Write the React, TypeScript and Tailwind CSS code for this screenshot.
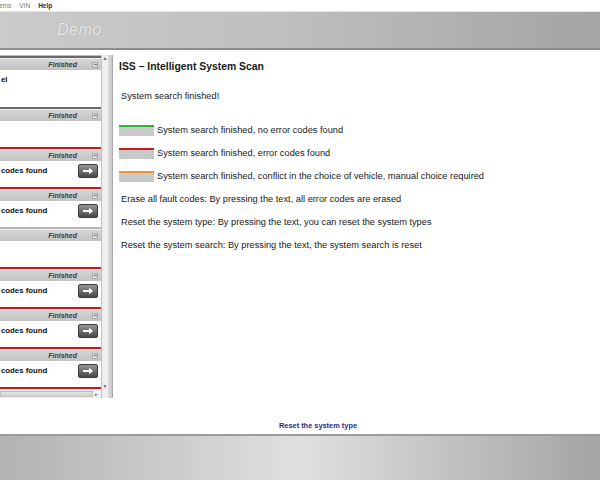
import React from "react";

type Entry = { status: "ok" | "error" | "none"; text?: string; arrow?: boolean; tall?: boolean; last?: boolean };

const entries: Entry[] = [
  { status: "none", text: "el", tall: true },
  { status: "none" },
  { status: "error", text: "codes found", arrow: true },
  { status: "error", text: "codes found", arrow: true },
  { status: "ok" },
  { status: "error", text: "codes found", arrow: true },
  { status: "error", text: "codes found", arrow: true },
  { status: "error", text: "codes found", arrow: true },
  { status: "error", last: true },
];

function ArrowButton() {
  return (
    <div className="w-[20px] h-[14px] rounded-[2px] bg-linear-to-b from-[#959595] to-[#4a4a4a] border border-[#3a3a3a] flex items-center justify-center">
      <svg width="12" height="8" viewBox="0 0 12 8">
        <path d="M1 3h6V0.8L11 4 7 7.2V5H1z" fill="#fff" />
      </svg>
    </div>
  );
}

function EntryRow({ e }: { e: Entry }) {
  const top = e.status === "error" ? "bg-[#c8161c]" : e.status === "ok" ? "bg-[#b8b8b8]" : "bg-[#6a6a6a]";
  if (e.last) return <div className={`h-[2px] ${top}`} />;
  return (
    <div>
      <div className={`h-[2px] ${top}`} />
      <div className="h-[1px] bg-[#eeeeee]" />
      {/* status header */}
      <div className="h-[11px] bg-linear-to-b from-[#d6d6d6] to-[#c2c2c2] flex items-center justify-end pr-[3px]">
        <span className="text-[7px] leading-none italic font-bold text-[#3c3c3c] mr-[15px]">Finished</span>
        <div className="w-[6px] h-[6px] bg-[#dadada] border border-[#a8a8a8] flex items-center justify-center">
          <div className="w-[3px] h-px bg-[#777]" />
        </div>
      </div>
      <div className={`${e.tall ? "h-[37px]" : "h-[26px]"} bg-white pt-[3px] pl-[1px] pr-[3px]`}>
        {e.text && (
          <div className="h-[14px] flex items-center justify-between">
            <span className="text-[7.8px] font-bold text-[#111]">{e.text}</span>
            {e.arrow && <ArrowButton />}
          </div>
        )}
      </div>
    </div>
  );
}

function Swatch({ color }: { color: string }) {
  return (
    <div className="w-[35px] h-[11px] flex flex-col">
      <div className={`h-[2px] ${color}`} />
      <div className="flex-1 bg-[#c9c9c9]" />
    </div>
  );
}

export default function App() {
  return (
    <div className="w-[600px] h-[480px] flex flex-col bg-white font-['Liberation_Sans',Arial,sans-serif] overflow-hidden">
      {/* menu bar */}
      <div className="h-[11px] flex items-center text-[6.5px] text-[#777] gap-[8px] -ml-[1px]">
        <span>ems</span>
        <span>VIN</span>
        <span className="text-[#333] font-bold">Help</span>
      </div>

      {/* header band */}
      <div className="h-[39px] bg-linear-to-r from-[#cbcbcb] via-[#bebebe] to-[#a4a4a4] border-t border-[#e6e6e6] border-b-2 border-b-[#8e8e8e] flex items-center pl-[57px]">
        <span className="text-[16px] italic text-[#e9e9e9] tracking-[0.5px] [text-shadow:0_0_1px_#9a9a9a]">Demo</span>
      </div>

      <div className="flex-1 flex flex-col">
        <div className="mt-[5px] h-[343px] flex">
          {/* system list */}
          <div className="w-[101px] flex flex-col">
            <div className="h-[335px] overflow-hidden border-t border-[#bdbdbd]">
              {entries.map((e, i) => (
                <EntryRow key={i} e={e} />
              ))}
            </div>
            <div className="h-[8px] flex items-center bg-[#f2f2f2]">
              <div className="w-[93px] h-[6px] bg-linear-to-b from-[#e4e4e4] to-[#cfcfcf] border border-[#c0c0c0]" />
              <span className="ml-[2px] text-[5px] leading-none text-[#666]">▸</span>
            </div>
          </div>
          {/* vertical scrollbar */}
          <div className="w-[7px] bg-[#eeeeee] border-l border-[#c4c4c4] flex flex-col items-center justify-between py-[1px]">
            <span className="text-[5px] leading-none text-[#666]">▲</span>
            <span className="text-[5px] leading-none text-[#666] mb-[8px]">▼</span>
          </div>
          <div className="w-[5px] bg-linear-to-r from-[#dedede] to-[#c6c6c6] border-r border-[#a9a9a9]" />

          {/* scan info */}
          <div className="flex-1 pl-[6px] pt-[6px] text-[#1a1a1a]">
            <h1 className="text-[10.4px] leading-[12px] font-bold">ISS – Intelligent System Scan</h1>
            <p className="mt-[17px] ml-[2px] text-[9.25px] leading-[12px]">System search finished!</p>
            <div className="mt-[22px] flex flex-col gap-[11px] text-[9.25px] leading-[12px]">
              <div className="flex items-center gap-[3px]">
                <Swatch color="bg-[#2fb52f]" />
                <span>System search finished, no error codes found</span>
              </div>
              <div className="flex items-center gap-[3px]">
                <Swatch color="bg-[#c81a1a]" />
                <span>System search finished, error codes found</span>
              </div>
              <div className="flex items-center gap-[3px]">
                <Swatch color="bg-[#f0952e]" />
                <span>System search finished, conflict in the choice of vehicle, manual choice required</span>
              </div>
              <p className="ml-[2px]">Erase all fault codes: By pressing the text, all error codes are erased</p>
              <p className="ml-[2px]">Reset the system type: By pressing the text, you can reset the system types</p>
              <p className="ml-[2px]">Reset the system search: By pressing the text, the system search is reset</p>
            </div>
          </div>
        </div>

        <div className="flex-1 flex items-end justify-center pb-[3px]">
          <span className="text-[7.4px] font-bold text-[#2b2b8c] ml-[36px]">Reset the system type</span>
        </div>
      </div>

      {/* footer band */}
      <div className="h-[46px] bg-linear-to-r from-[#b2b2b2] via-[#e0e0e0] to-[#a4a4a4] border-t-2 border-[#9c9c9c]" />
    </div>
  );
}
